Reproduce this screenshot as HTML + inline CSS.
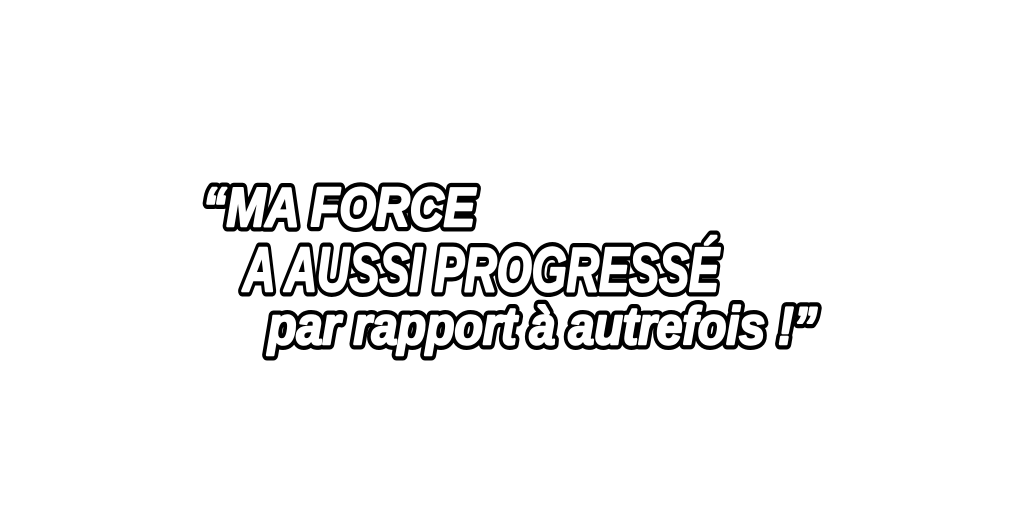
<!DOCTYPE html>
<html><head><meta charset="utf-8"><style>
html,body{margin:0;padding:0;background:#fff;width:1024px;height:512px;overflow:hidden}
</style></head><body>
<svg width="1024" height="512" xmlns="http://www.w3.org/2000/svg" style="display:block">
<g font-family="'Liberation Sans Narrow','Liberation Sans',sans-serif" font-weight="bold" font-style="italic" stroke-linejoin="round">
<g fill="#000" stroke="#000" stroke-width="11">
<text x="203" y="226" font-size="55" textLength="272" lengthAdjust="spacingAndGlyphs">“MA FORCE</text>
<text x="243" y="291" font-size="62" textLength="476" lengthAdjust="spacingAndGlyphs">A AUSSI PROGRESSÉ</text>
<text x="268" y="344" font-size="53" textLength="549" lengthAdjust="spacingAndGlyphs">par rapport à autrefois !”</text>
</g>
<g fill="#fff" stroke="#fff" stroke-width="2.5">
<text x="203" y="226" font-size="55" textLength="272" lengthAdjust="spacingAndGlyphs">“MA FORCE</text>
<text x="243" y="291" font-size="62" textLength="476" lengthAdjust="spacingAndGlyphs">A AUSSI PROGRESSÉ</text>
<text x="268" y="344" font-size="53" textLength="549" lengthAdjust="spacingAndGlyphs">par rapport à autrefois !”</text>
</g>
</g>
</svg>
</body></html>
